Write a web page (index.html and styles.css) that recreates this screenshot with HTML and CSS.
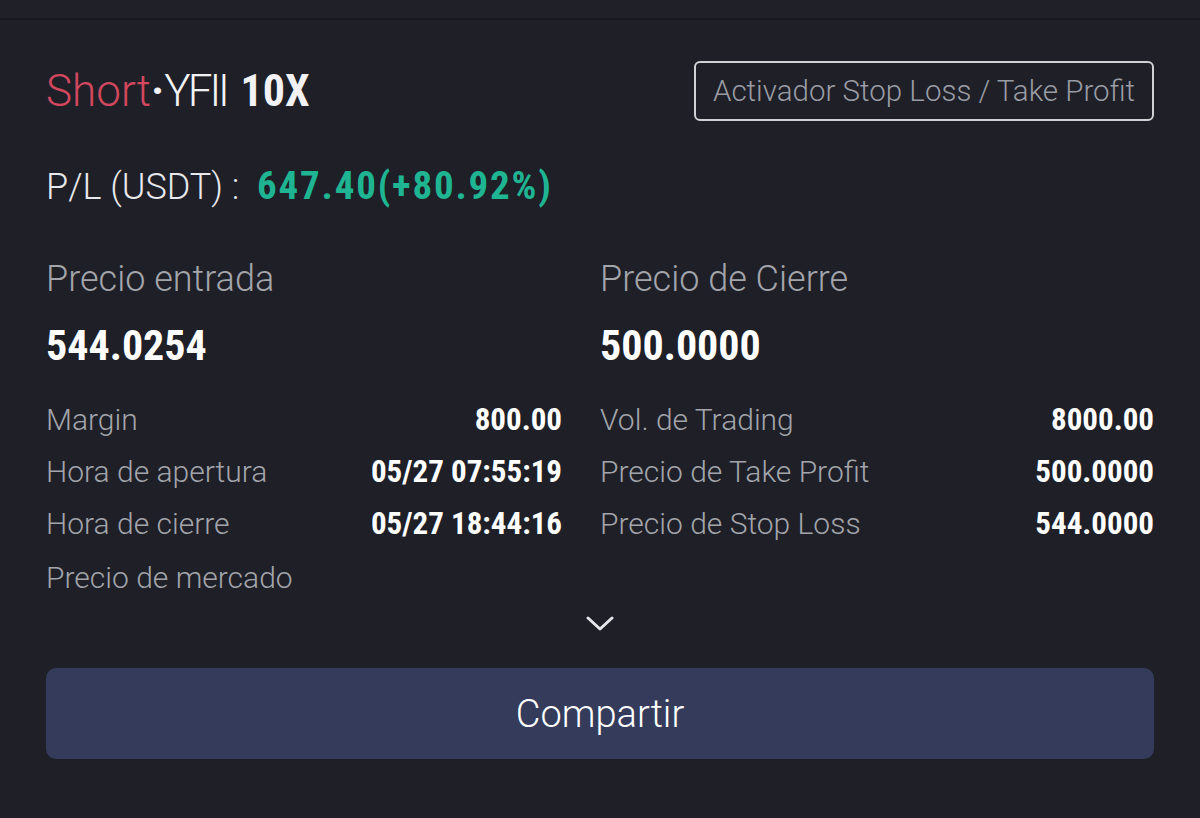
FILE: index.html
```html
<!DOCTYPE html>
<html lang="es">
<head>
    <meta charset="UTF-8">
    <meta name="viewport" content="width=device-width, initial-scale=1.0">
    <title>Detalle de posición</title>
    <link rel="stylesheet" href="styles.css">
</head>
<body>
    <div class="barra-superior"></div>

    <div class="detalle">
        <div class="cabecera">
            <h1 class="titulo"><span class="lado">Short</span><span class="punto">·</span><span class="par">YFII</span> <b class="apalancamiento">10X</b></h1>
            <button class="boton-borde">Activador Stop Loss / Take Profit</button>
        </div>

        <p class="pl">P/L (USDT) :&nbsp; <span class="ganancia">647.40(+80.92%)</span></p>

        <div class="columnas">
            <div class="columna">
                <p class="etiqueta-grande">Precio entrada</p>
                <p class="precio">544.0254</p>
                <div class="fila"><span>Margin</span><b>800.00</b></div>
                <div class="fila"><span>Hora de apertura</span><b>05/27 07:55:19</b></div>
                <div class="fila"><span>Hora de cierre</span><b>05/27 18:44:16</b></div>
                <div class="fila fila-ultima"><span>Precio de mercado</span><b></b></div>
            </div>
            <div class="columna">
                <p class="etiqueta-grande">Precio de Cierre</p>
                <p class="precio">500.0000</p>
                <div class="fila"><span>Vol. de Trading</span><b>8000.00</b></div>
                <div class="fila"><span>Precio de Take Profit</span><b>500.0000</b></div>
                <div class="fila"><span>Precio de Stop Loss</span><b>544.0000</b></div>
            </div>
        </div>

        <div class="desplegar">
            <svg width="28" height="18" viewBox="0 0 28 18"><path d="M2 3 L14 14 L26 3" fill="none" stroke="#e6e7ea" stroke-width="3" stroke-linecap="round" stroke-linejoin="round"/></svg>
        </div>

        <button class="boton-compartir">Compartir</button>
    </div>
</body>
</html>
```

FILE: styles.css
```css
body {
    margin: 0;
    background-color: #1e1f27;
    font-family: Roboto, "Liberation Sans", sans-serif;
    color: #ffffff;
}
p {
    margin: 0;
}
.barra-superior {
    height: 18px;
    background-color: #1f2028;
    border-bottom: 2px solid #191a20;
}
.detalle {
    padding: 0 46px 0 46px;
}
.cabecera {
    display: flex;
    justify-content: space-between;
    align-items: center;
    margin-top: 41px;
}
.titulo {
    margin: 0;
    font-size: 44px;
    font-weight: 300;
    color: #f2f2f4;
}
.lado {
    color: #d2475e;
}
.punto {
    font-weight: 700;
}
.par {
    letter-spacing: -3px;
}
.apalancamiento {
    font-family: "Liberation Sans Narrow", "Roboto Condensed", Roboto, sans-serif;
    font-weight: 700;
    margin-left: 3px;
}
.boton-borde {
    height: 60px;
    padding: 0 17px;
    background: transparent;
    border: 2px solid #d0d1d5;
    border-radius: 6px;
    color: #9a9ca4;
    font-family: Roboto, sans-serif;
    font-weight: 300;
    font-size: 29.5px;
}
.pl {
    margin-top: 42px;
    font-size: 36px;
    font-weight: 300;
    color: #e8e9ec;
}
.ganancia {
    font-family: "Liberation Sans Narrow", "Roboto Condensed", Roboto, sans-serif;
    font-size: 39px;
    font-weight: 700;
    letter-spacing: 1.8px;
    color: #1fb592;
}
.columnas {
    display: grid;
    grid-template-columns: 516px 1fr;
    column-gap: 38px;
    margin-top: 49px;
}
.etiqueta-grande {
    font-size: 36px;
    font-weight: 300;
    color: #a3a5ab;
}
.precio {
    margin-top: 21px;
    margin-bottom: 23px;
    font-family: "Liberation Sans Narrow", "Roboto Condensed", Roboto, sans-serif;
    font-size: 42px;
    font-weight: 700;
    color: #ffffff;
}
.fila {
    display: flex;
    justify-content: space-between;
    align-items: center;
    height: 52px;
    font-size: 30px;
    font-weight: 300;
    color: #a3a5ab;
}
.fila-ultima {
    margin-top: 2px;
}
.fila b {
    font-family: "Liberation Sans Narrow", "Roboto Condensed", Roboto, sans-serif;
    font-size: 31px;
    font-weight: 700;
    color: #ffffff;
}
.desplegar {
    display: flex;
    justify-content: center;
    margin-top: 12px;
}
.boton-compartir {
    display: block;
    width: 100%;
    height: 91px;
    margin-top: 35px;
    background-color: #343b5b;
    border: none;
    border-radius: 10px;
    color: #ffffff;
    font-family: Roboto, sans-serif;
    font-weight: 300;
    font-size: 38px;
}
```
